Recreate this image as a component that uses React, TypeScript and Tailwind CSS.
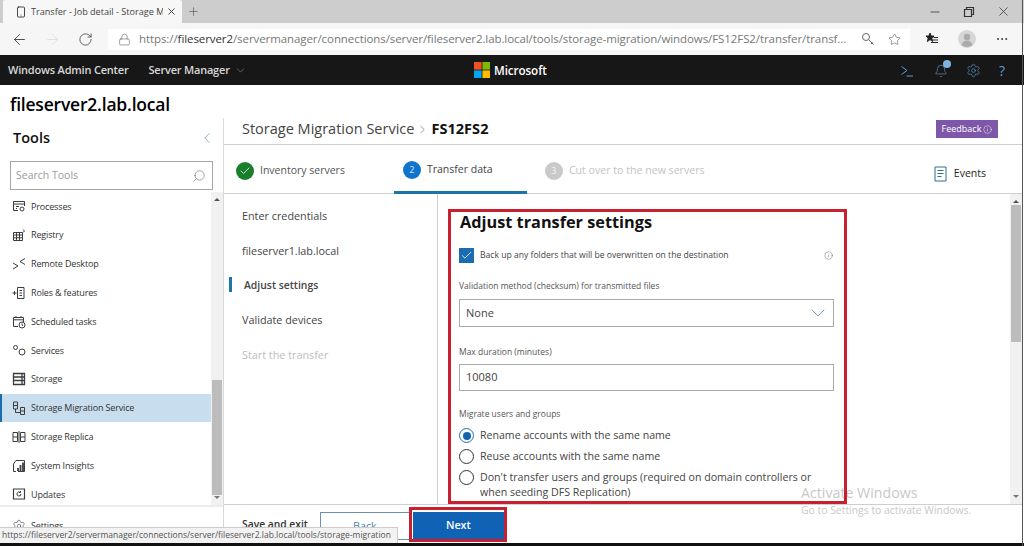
import React from 'react';
import {
  ArrowLeft, ArrowRight, RotateCw, Lock, Plus, X, Minus, Search, Star, Check,
  ChevronDown, ChevronLeft, ChevronRight, Info, Smartphone, Settings, Bell, MoreHorizontal,
} from 'lucide-react';

const ic = { width: 14, height: 14, viewBox: '0 0 14 14', fill: 'none', stroke: '#3c3c3c', strokeWidth: 1 };

// little line icons of the tools list
const toolIcons: Record<string, React.ReactNode> = {
  Processes: <svg {...ic}><path d="M6 11.500H1.500v-9h11V7M1.500 5h11" /><circle cx="10" cy="10" r="2" /><path d="M4 7.500h3M4 9.500h1" /></svg>,
  Registry: <svg {...ic}><path d="M1.500 4.500h9v8h-9zM1.500 7h9M1.500 9.800h9M4.500 4.500v8M7.500 4.500v8" /><path d="M11 1.500l1.500 1.500-1.500 1.500" /></svg>,
  'Remote Desktop': <svg {...ic}><path d="M1 6l5 3-5 3M13 1.500L8 4.500l5 3" /></svg>,
  'Roles & features': <svg {...ic}><path d="M5.500 1.500h6.500v11h-6.500zM7.500 4.500h2.500M7.500 7h2.500M7.500 9.500h2.500M0.500 7h4M2.500 5v4" /></svg>,
  'Scheduled tasks': <svg {...ic}><path d="M6 11.500H1.500v-9h10v4.500M1.500 4.800h10M4 1v2M9 1v2" /><circle cx="10" cy="10" r="3" /><path d="M10 8.500V10l1 .8" /></svg>,
  Services: <svg {...ic}><circle cx="3.500" cy="4.500" r="2" /><circle cx="10" cy="9" r="3" /></svg>,
  Storage: <svg {...ic}><path d="M1.500 1.500h11v11h-11zM1.500 5h11M1.500 8.500h11M10 1.500v11" strokeWidth="1.300" /></svg>,
  'Storage Migration Service': <svg {...ic}><path d="M1.500 1h4v7h-4zM8.500 6.500h4v7h-4zM1.500 4.500h4M8.500 10h4M3.500 8v3.500h5" /></svg>,
  'Storage Replica': <svg {...ic}><path d="M1 2.500h4.500v9H1zM8.500 2.500H13v9H8.500zM1 7h4.500M8.500 7H13M7 1v12" /></svg>,
  'System Insights': <svg {...ic}><path d="M4 12.500H1.500V5L4 1.500h8.500v11H6" /><path d="M6 12V9M8.500 12V6M11 12V3.500" strokeWidth="1.800" /></svg>,
  Updates: <svg {...ic}><path d="M1.500 2h11v10h-11z" strokeWidth="1.200" /><path d="M9 7a2 2 0 1 1-.8-1.600M8.500 4v1.500H7" /></svg>,
  Settings: <Settings size={14} strokeWidth={1} color="#3c3c3c" />,
};

const tools = ['Processes', 'Registry', 'Remote Desktop', 'Roles & features', 'Scheduled tasks', 'Services', 'Storage', 'Storage Migration Service', 'Storage Replica', 'System Insights', 'Updates'];

function Radio({ on }: { on?: boolean }) {
  return (
    <span className={`flex h-[15px] w-[15px] shrink-0 items-center justify-center rounded-full border ${on ? 'border-[#1f6fb5]' : 'border-[#333]'}`}>
      {on && <span className="h-[8px] w-[8px] rounded-full bg-[#1565ad]" />}
    </span>
  );
}

function StepDot({ n, color }: { n: string; color: string }) {
  return <span className={`flex h-[18px] w-[18px] items-center justify-center rounded-full text-[9px] text-white/80 ${color}`}>{n}</span>;
}

function ScrollBar({ thumb, thumbH }: { thumb: string; thumbH: string }) {
  return (
    <div className="flex w-[12px] shrink-0 flex-col items-center bg-[#f1f1f1]">
      <span className="mt-[6px] h-0 w-0 border-x-[3px] border-b-[3px] border-x-transparent border-b-[#555]" />
      <div className={`mt-[2px] w-[10px] bg-[#bcbcbc] ${thumb} ${thumbH}`} />
      <span className="mt-auto mb-[6px] h-0 w-0 border-x-[3px] border-t-[3px] border-x-transparent border-t-[#777]" />
    </div>
  );
}

export default function App() {
  return (
    <div className="relative h-[546px] w-[1024px] overflow-hidden bg-white font-['Open_Sans',sans-serif] text-[#333]">
      {/* tab strip */}
      <div className="flex h-[23px] items-center bg-[#cdcdcd]">
        <div className="ml-[3px] flex h-[23px] w-[179px] items-center rounded-t-[2px] bg-[#f7f7f7] pl-[12px] pr-[5px]">
          <Smartphone size={12} strokeWidth={1.800} color="#333" />
          <span className="ml-[4px] w-[132px] overflow-hidden whitespace-nowrap text-[9.100px] text-[#444]">Transfer - Job detail - Storage M</span>
          <X size={11} strokeWidth={2} color="#333" className="ml-auto" />
        </div>
        <Plus size={13} strokeWidth={1.200} color="#555" className="ml-[5px]" />
        <div className="ml-auto flex items-center gap-[20px] pr-[13px]">
          <Minus size={14} strokeWidth={1.500} color="#444" />
          <svg width="14" height="14" viewBox="0 0 14 14" fill="none" stroke="#333" strokeWidth="1.200"><path d="M2.500 4.500h7v7h-7zM4.500 4.500v-2h7v7h-2" /></svg>
          <X size={15} strokeWidth={1.200} color="#333" />
        </div>
      </div>

      {/* address bar */}
      <div className="flex h-[32px] items-center bg-[#f6f6f6] pl-[11px]">
        <ArrowLeft size={17} strokeWidth={1.200} color="#333" />
        <ArrowRight size={17} strokeWidth={1.200} color="#ddd" className="ml-[16px]" />
        <RotateCw size={15} strokeWidth={1.200} color="#333" className="ml-[17px]" />
        <div className="ml-[15px] flex h-[21px] w-[802px] items-center bg-white pl-[10px]">
          <Lock size={13} strokeWidth={1} color="#555" />
          <span className="ml-[8px] w-[710px] whitespace-nowrap text-[11.500px] tracking-[-0.08px] text-[#777]">
            https://<span className="text-[#333]">fileserver2</span>/servermanager/connections/server/fileserver2.lab.local/tools/storage-migration/windows/FS12FS2/transfer/transf...
          </span>
          <svg width="14" height="14" viewBox="0 0 14 14" fill="none" stroke="#666" strokeWidth="1" className="ml-[12px]"><circle cx="5" cy="5" r="3.500" /><path d="M7.500 7.500l5 5M10 12l1.500-1.500" /></svg>
          <Star size={13} strokeWidth={1} color="#444" className="ml-[13px]" />
        </div>
        <svg width="14" height="14" viewBox="0 0 14 14" stroke="#222" strokeWidth="1" className="ml-[15px]">
          <path d="M5 1l1.200 3H9L6.800 6 7.600 9.500 5 7.500 2.400 9.500 3.200 6 1 4h2.800z" fill="#222" />
          <path d="M8.500 5.500H13M8 8h5M6 10.500h7" fill="none" />
        </svg>
        <svg width="18" height="18" viewBox="0 0 18 18" className="ml-[19px]">
          <circle cx="9" cy="9" r="9" fill="#d6d6d6" />
          <circle cx="9" cy="7" r="3.200" fill="#ababab" />
          <path d="M3.500 15c1-3.500 3-4.500 5.500-4.500s4.500 1 5.500 4.500a9 9 0 0 1-11 0z" fill="#ababab" />
        </svg>
        <MoreHorizontal size={14} strokeWidth={1.500} color="#333" className="ml-[19px]" />
      </div>

      {/* black app bar */}
      <div className="relative flex h-[30px] items-center bg-[#171717] pl-[8px] pt-[1px] text-[11px] font-semibold tracking-[-0.2px] text-[#d8d8d8]">
        <span>Windows Admin Center</span>
        <span className="ml-[20px]">Server Manager</span>
        <ChevronDown size={13} strokeWidth={1} color="#999" className="ml-[4px]" />
        <div className="absolute left-[474px] flex items-center text-[11.700px] tracking-[-0.1px] text-white">
          <svg width="16" height="16" viewBox="0 0 16 16" className="mr-[4px]">
            <rect width="7.600" height="7.600" fill="#f25022" />
            <rect x="8.400" width="7.600" height="7.600" fill="#7fba00" />
            <rect y="8.400" width="7.600" height="7.600" fill="#00a4ef" />
            <rect x="8.400" y="8.400" width="7.600" height="7.600" fill="#ffb900" />
          </svg>
          Microsoft
        </div>
        <div className="ml-auto flex items-center pr-[13px]">
          <svg width="14" height="14" viewBox="0 0 14 14" fill="none" stroke="#5f9fd0" strokeWidth="1"><path d="M1.500 2.500L7 6.500l-5.500 4M6.500 12H13" /></svg>
          <span className="relative ml-[20px]">
            <Bell size={14} strokeWidth={1} color="#6aa6d8" />
            <span className="absolute -right-[3px] -top-[4px] h-[8px] w-[8px] rounded-full bg-[#7fb2e0]" />
          </span>
          <Settings size={15} strokeWidth={1} color="#5f9fd0" className="ml-[18px]" />
          <span className="ml-[18px] w-[12px] text-[14px] font-normal text-[#5f9fd0]">?</span>
        </div>
      </div>

      <h1 className="flex h-[33px] items-center pl-[10px] pt-[6px] text-[17.500px] font-semibold tracking-[-0.2px] text-black">fileserver2.lab.local</h1>

      <div className="flex h-[425px]">
        {/* tools sidebar */}
        <aside className="flex w-[224px] shrink-0 flex-col border-r border-[#d9d9d9]">
          <div className="flex h-[43px] shrink-0 items-center justify-between pb-[4px] pl-[13px] pr-[7px]">
            <span className="text-[14.500px] font-semibold text-[#111]">Tools</span>
            <ChevronLeft size={18} strokeWidth={1} color="#5a93bd" />
          </div>
          <div className="mx-[10px] flex h-[29px] shrink-0 items-center justify-between border border-[#a6a6a6] pl-[5px] pr-[6px] text-[10.500px] text-[#9c9c9c]">
            Search Tools
            <Search size={14} strokeWidth={1} color="#666" className="-scale-x-100" />
          </div>
          <div className="mt-[2px] flex h-[315px] shrink-0 border-b-2 border-[#ececec]">
            <ul className="flex-1 overflow-hidden">
              {tools.map((t) => (
                <li key={t} className={`flex h-[28.800px] items-center gap-[5px] text-[9px] tracking-[-0.15px] ${t === 'Storage Migration Service' ? 'border-l-2 border-[#1b6ca8] bg-[#c8deee] pl-[10px]' : 'pl-[12px]'}`}>
                  {toolIcons[t]}
                  <span>{t}</span>
                </li>
              ))}
            </ul>
            <ScrollBar thumb="mt-[179px]" thumbH="h-[115px]" />
          </div>
          <div className="flex items-center gap-[5px] pl-[12px] pt-[12px] text-[9px] tracking-[-0.15px]">
            {toolIcons.Settings}
            <span>Settings</span>
          </div>
        </aside>

        {/* main area */}
        <main className="flex min-w-0 flex-1 flex-col pr-[2px]">
          <div className="flex h-[27px] shrink-0 items-center justify-between border-b border-[#cfcfcf] pb-[4px] pl-[18px] pr-[24px]">
            <div className="flex items-center text-[14.500px] text-[#444]">
              Storage Migration Service
              <ChevronRight size={13} strokeWidth={1} color="#444" className="mx-[2px]" />
              <span className="font-bold tracking-[0.05px] text-[#111]">FS12FS2</span>
            </div>
            <span className="flex h-[18px] w-[62px] items-center justify-center gap-[2px] bg-[#7e57a8] text-[9px] text-white">
              Feedback <Info size={9} strokeWidth={1.200} />
            </span>
          </div>

          <div className="relative flex h-[49px] shrink-0 items-center border-b border-[#cfcfcf] pt-[3px] text-[10.500px]">
            <div className="ml-[12px] flex items-center gap-[6px] text-[#555]">
              <span className="flex h-[18px] w-[18px] items-center justify-center rounded-full bg-[#1a7f2b]">
                <Check size={12} strokeWidth={1.500} color="#fff" />
              </span>
              Inventory servers
            </div>
            <div className="-mt-[3px] ml-[49px] flex h-[49px] w-[133px] items-center gap-[6px] border-b-[3px] border-[#1b75a8] pt-[4px] pl-[9px] text-[#444]">
              <StepDot n="2" color="bg-[#0f75cc]" />
              Transfer data
            </div>
            <div className="ml-[18px] flex items-center gap-[6px] text-[10.600px] text-[#c4c4c4]">
              <StepDot n="3" color="bg-[#c9c9c9]" />
              Cut over to the new servers
            </div>
            <div className="ml-auto mr-[36px] mt-[6px] flex items-center gap-[7px] text-[#222]">
              <svg width="13" height="16" viewBox="0 0 13 16" fill="none" stroke="#2c6e86" strokeWidth="1"><path d="M1 1h11v14H1zM3.500 4.500h6M3.500 7.500h6M3.500 10.500h4" /></svg>
              Events
            </div>
          </div>

          <div className="flex h-[311px] shrink-0 border-b border-[#cfcfcf]">
            <nav className="flex w-[214px] shrink-0 flex-col border-r border-[#cfcfcf] pl-[18px] pt-[5px] text-[10.800px] text-[#444]">
              <span className="flex h-[34.700px] items-center">Enter credentials</span>
              <span className="flex h-[34.700px] items-center">fileserver1.lab.local</span>
              <span className="relative flex h-[34.700px] items-center pl-[2px] text-[10.400px] font-semibold">
                <span className="absolute -left-[13px] top-[9px] h-[15px] w-[3px] bg-[#1b75a8]" />
                Adjust settings
              </span>
              <span className="flex h-[34.700px] items-center">Validate devices</span>
              <span className="flex h-[34.700px] items-center text-[#bdbdbd]">Start the transfer</span>
            </nav>

            <section className="min-w-0 flex-1 pl-[21px] pr-[176px] pt-[15px]">
              <h2 className="pl-[1px] text-[16.300px] font-bold leading-[26px] text-[#111]">Adjust transfer settings</h2>
              <div className="mt-[13px] flex items-center">
                <span className="flex h-[15px] w-[15px] items-center justify-center bg-[#1b6cb0]">
                  <Check size={13} strokeWidth={1.500} color="#fff" />
                </span>
                <span className="ml-[6px] text-[8.600px] text-[#444]">Back up any folders that will be overwritten on the destination</span>
                <Info size={9} strokeWidth={1} color="#444" className="ml-auto mr-[1px]" />
              </div>
              <p className="mt-[16px] text-[8.500px] leading-[14px] text-[#555]">Validation method (checksum) for transmitted files</p>
              <div className="mt-[6px] flex h-[28px] items-center justify-between border border-[#aaa] pl-[6px] pr-[3px] text-[11px] text-[#444]">
                None
                <ChevronDown size={24} strokeWidth={0.800} color="#5a8fb5" />
              </div>
              <p className="mt-[18px] text-[8.500px] leading-[14px] text-[#555]">Max duration (minutes)</p>
              <div className="mt-[5px] flex h-[27px] items-center border border-[#aaa] pl-[6px] text-[11px] text-[#444]">10080</div>
              <p className="mt-[16px] text-[8.500px] leading-[14px] text-[#555]">Migrate users and groups</p>
              <div className="mt-[4px] flex h-[21px] items-center gap-[6px] text-[10.600px] text-[#444]"><Radio on />Rename accounts with the same name</div>
              <div className="flex h-[21px] items-center gap-[6px] text-[10.600px] text-[#444]"><Radio />Reuse accounts with the same name</div>
              <div className="flex gap-[6px] pt-[3px] text-[10.600px] leading-[15px] text-[#444]"><Radio /><span>Don't transfer users and groups (required on domain controllers or<br />when seeding DFS Replication)</span></div>
            </section>
            <ScrollBar thumb="mt-[0px]" thumbH="h-[137px]" />
          </div>

          <div className="flex items-start pl-[18px] pt-[7px] text-[10.800px]">
            <span className="mt-[5px] text-[10.300px] font-semibold text-[#333]">Save and exit</span>
            <span className="ml-[12px] flex h-[28px] w-[90px] items-center justify-center border border-[#6b90ad] text-[#4a7fa8]">Back</span>
            <span className="ml-[3px] flex h-[27px] w-[91px] items-center justify-center bg-[#0f62b4] pb-[1px] font-semibold text-white">Next</span>
          </div>
        </main>
      </div>

      {/* activation watermark */}
      <div className="pointer-events-none absolute left-[801px] top-[484px] text-[#c8c8c8]">
        <p className="text-[14.200px] leading-[18px]">Activate Windows</p>
        <p className="text-[10.400px] leading-[16px]">Go to Settings to activate Windows.</p>
      </div>

      {/* red annotation frames drawn over the shot */}
      <div className="pointer-events-none absolute left-[448px] top-[209px] h-[295px] w-[399px] border-[3px] border-[#c8202f]" />
      <div className="pointer-events-none absolute left-[409px] top-[507px] h-[35px] w-[98px] border-[3px] border-[#c8202f]" />

      {/* hover url status bubble */}
      <div className="absolute left-0 top-[527px] flex h-[16px] items-center border-r border-t border-[#ccc] bg-[#f2f2f2] pl-[2px] pr-[6px] text-[8.500px] text-[#555]">
        https://fileserver2/servermanager/connections/server/fileserver2.lab.local/tools/storage-migration
      </div>
      <div className="absolute bottom-0 left-0 h-[3px] w-full bg-[#111]" />
      <div className="absolute right-[1px] top-0 h-full w-px bg-[#555]" />
    </div>
  );
}
